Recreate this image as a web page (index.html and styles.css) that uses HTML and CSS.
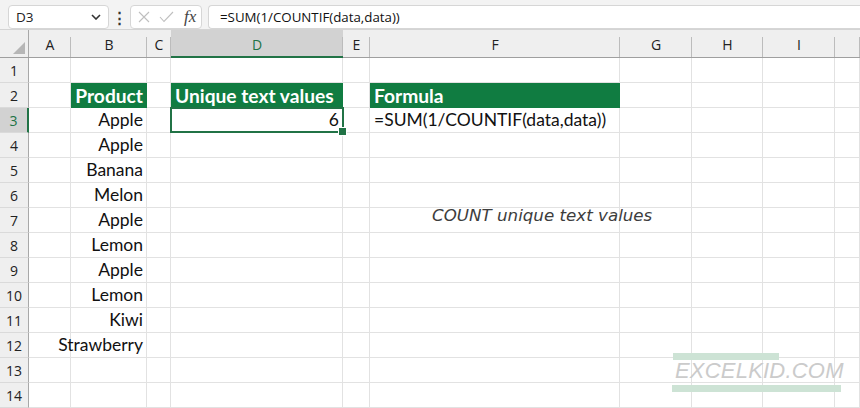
FILE: index.html
```html
<!DOCTYPE html>
<html>
<head>
<meta charset="utf-8">
<link rel="stylesheet" href="styles.css">
</head>
<body>
<div class="app">
  <div class="fbar">
    <div class="namebox">
      <span>D3</span>
      <svg class="chev" width="10" height="6" viewBox="0 0 10 6"><path d="M1 1 L5 5 L9 1" fill="none" stroke="#333" stroke-width="1.6"/></svg>
    </div>
    <div class="dots">⋮</div>
    <div class="fxbox">
      <svg width="12" height="12" viewBox="0 0 12 12"><path d="M1 1 L11 11 M11 1 L1 11" stroke="#bfbfbf" stroke-width="1.1"/></svg>
      <svg width="15" height="12" viewBox="0 0 15 12"><path d="M1 6 L5 10.5 L14 1" fill="none" stroke="#bfbfbf" stroke-width="1.1"/></svg>
      <span class="fx">fx</span>
    </div>
    <div class="finput">=SUM(1/COUNTIF(data,data))</div>
  </div>

  <div class="sheet">
    <div class="row head">
      <div class="corner"><span class="tri"></span></div>
      <div>A</div><div>B</div><div>C</div><div class="on">D</div><div>E</div><div>F</div><div>G</div><div>H</div><div>I</div><div></div>
    </div>
    <div class="row"><div class="rh">1</div><div></div><div></div><div></div><div></div><div></div><div></div><div></div><div></div><div></div><div></div></div>
    <div class="row"><div class="rh">2</div><div></div><div class="hdr r">Product</div><div></div><div class="hdr">Unique text values</div><div></div><div class="hdr">Formula</div><div></div><div></div><div></div><div></div></div>
    <div class="row"><div class="rh on">3</div><div></div><div class="r">Apple</div><div></div><div class="r sel">6</div><div></div><div>=SUM(1/COUNTIF(data,data))</div><div></div><div></div><div></div><div></div></div>
    <div class="row"><div class="rh">4</div><div></div><div class="r">Apple</div><div></div><div></div><div></div><div></div><div></div><div></div><div></div><div></div></div>
    <div class="row"><div class="rh">5</div><div></div><div class="r">Banana</div><div></div><div></div><div></div><div></div><div></div><div></div><div></div><div></div></div>
    <div class="row"><div class="rh">6</div><div></div><div class="r">Melon</div><div></div><div></div><div></div><div></div><div></div><div></div><div></div><div></div></div>
    <div class="row"><div class="rh">7</div><div></div><div class="r">Apple</div><div></div><div></div><div></div><div></div><div></div><div></div><div></div><div></div></div>
    <div class="row"><div class="rh">8</div><div></div><div class="r">Lemon</div><div></div><div></div><div></div><div></div><div></div><div></div><div></div><div></div></div>
    <div class="row"><div class="rh">9</div><div></div><div class="r">Apple</div><div></div><div></div><div></div><div></div><div></div><div></div><div></div><div></div></div>
    <div class="row"><div class="rh">10</div><div></div><div class="r">Lemon</div><div></div><div></div><div></div><div></div><div></div><div></div><div></div><div></div></div>
    <div class="row"><div class="rh">11</div><div></div><div class="r">Kiwi</div><div></div><div></div><div></div><div></div><div></div><div></div><div></div><div></div></div>
    <div class="row"><div class="rh">12</div><div></div><div class="r">Strawberry</div><div></div><div></div><div></div><div></div><div></div><div></div><div></div><div></div></div>
    <div class="row"><div class="rh">13</div><div></div><div></div><div></div><div></div><div></div><div></div><div></div><div></div><div></div><div></div></div>
    <div class="row"><div class="rh">14</div><div></div><div></div><div></div><div></div><div></div><div></div><div></div><div></div><div></div><div></div></div>

    <div class="note">COUNT unique text values</div>
    <div class="wm">
      <span class="bar1"></span>
      <span class="wmtext">EXCELKID.COM</span>
      <span class="bar2"></span>
    </div>
  </div>
</div>
</body>
</html>
```

FILE: styles.css
```css
* { box-sizing: border-box; }
html, body { margin: 0; padding: 0; background: #fff; }
.app { width: 860px; height: 408px; overflow: hidden; position: relative; }

.fbar {
  height: 30px;
  background: #f3f3f3;
  border-bottom: 1px solid #d4d4d4;
  display: flex;
  align-items: flex-start;
  padding-top: 5px;
  font-family: "Open Sans", "Noto Sans", sans-serif;
  font-size: 14px;
  color: #222;
}
.namebox {
  margin-left: 8px;
  width: 101px;
  height: 24px;
  background: #fff;
  border: 1px solid #d6d6d6;
  border-radius: 4px;
  display: flex;
  align-items: center;
  justify-content: space-between;
  padding: 0 7px 0 7px;
}
.namebox span { font-size: 13.5px; }
.dots { width: 21px; text-align: center; font-size: 15px; line-height: 24px; color: #333; font-weight: bold; }
.fxbox {
  width: 72px;
  height: 24px;
  background: #fff;
  border: 1px solid #d6d6d6;
  border-radius: 4px;
  display: flex;
  align-items: center;
  padding-left: 7px;
  gap: 9px;
}
.fx { font-family: "Liberation Serif", "DejaVu Serif", serif; font-style: italic; font-size: 17px; color: #444; margin-left: 1px; }
.finput {
  margin-left: 6px;
  flex: 1;
  height: 24px;
  background: #fff;
  border: 1px solid #d6d6d6;
  border-right: none;
  border-radius: 4px 0 0 4px;
  padding-left: 11px;
  line-height: 22px;
  font-size: 13.3px;
  color: #111;
}

.sheet { position: relative; }
.row {
  display: grid;
  grid-template-columns: 29px 42px 76px 24px 172px 27px 250px 72px 71px 72px 1fr;
  height: 25px;
  font-family: "Lato", "Noto Sans", sans-serif;
  font-size: 17.5px;
  color: #111;
}
.row > div {
  border-right: 1px solid #e2e2e2;
  border-bottom: 1px solid #e2e2e2;
  display: flex;
  align-items: flex-end;
  padding: 0 4px 1px 4px;
  white-space: nowrap;
  overflow: visible;
  line-height: 22px;
}
.row > div.r { justify-content: flex-end; padding-right: 3px; }

.row.head {
  height: 28px;
  background: #efefef;
  font-family: "Open Sans", "Noto Sans", sans-serif;
  font-size: 14px;
  color: #222;
}
.row.head > div {
  border-bottom: 1px solid #9f9f9f;
  border-right: none;
  justify-content: center;
  align-items: center;
  padding: 3px 0 0 0;
  position: relative;
}
.row.head > div::after {
  content: "";
  position: absolute;
  right: 0; top: 7px; bottom: 0;
  width: 1px;
  background: #bcbcbc;
}
.row.head > div.corner::after { top: 0; background: #a8a8a8; }
.row.head > div.on { background: #d2d2d2; color: #217346; border-bottom: 2px solid #217346; }
.tri {
  position: absolute;
  right: 4px; bottom: 3px;
  width: 0; height: 0;
  border-left: 12px solid transparent;
  border-bottom: 12px solid #b6b6b6;
}

.row > div.rh {
  background: #efefef;
  border-right: 1px solid #a8a8a8;
  border-bottom: 1px solid #dadada;
  justify-content: center;
  align-items: center;
  padding: 1px 0 0 0;
  font-family: "Open Sans", "Noto Sans", sans-serif;
  font-size: 14px;
  color: #222;
}
.row > div.rh.on { background: #d2d2d2; color: #217346; border-right: 2px solid #217346; }

.row > div.hdr {
  background: #107c41;
  border-color: #107c41;
  color: #fff;
  font-weight: bold;
  font-size: 19.2px;
  padding-bottom: 0;
}
.row > div.sel { position: relative; }
.row > div.sel::before {
  content: "";
  position: absolute;
  left: -1px; top: -1px; right: -2px; bottom: -1px;
  border: 2px solid #217346;
}
.row > div.sel::after {
  content: "";
  position: absolute;
  right: -5px; bottom: -4px;
  width: 7px; height: 7px;
  background: #217346;
  border: 1px solid #fff;
}

.note {
  position: absolute;
  left: 432px; top: 175px;
  font-family: "DejaVu Sans", sans-serif;
  font-style: italic;
  font-size: 16.7px;
  color: #3d3d3d;
}
.wm { position: absolute; left: 672px; top: 323px; width: 170px; height: 40px; }
.bar1 { position: absolute; left: 1px; top: 0; width: 106px; height: 7px; background: #cde3d5; }
.bar2 { position: absolute; left: 0; top: 32px; width: 169px; height: 7px; background: #cde3d5; }
.wmtext {
  position: absolute;
  left: 3px; top: 5px;
  font-family: "Liberation Sans", sans-serif;
  font-style: italic;
  font-size: 22px;
  letter-spacing: 0.2px;
  color: #cbcbcb;
}
```
